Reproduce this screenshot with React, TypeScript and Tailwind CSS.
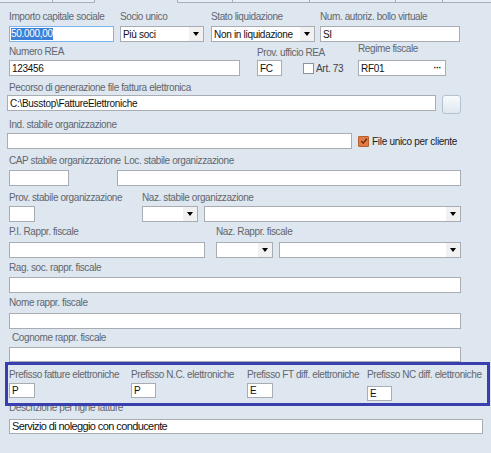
import React from "react"

type P = { children?: React.ReactNode; className?: string }

function Label({ children, className = "" }: P) {
  return (
    <div className={`h-[12px] whitespace-nowrap text-[10px] leading-[12px] tracking-[-0.4px] text-[#62676e] ${className}`}>
      {children}
    </div>
  )
}

function TextBox({ children, className = "" }: P) {
  return (
    <div className={`flex items-center overflow-hidden whitespace-nowrap border border-[#a9adb3] bg-white pl-[2px] text-[10px] tracking-[-0.3px] text-[#111] ${className}`}>
      {children}
    </div>
  )
}

function Select({ children, className = "" }: P) {
  return (
    <div className={`flex border border-[#a9adb3] bg-white ${className}`}>
      <div className="flex flex-1 items-center overflow-hidden whitespace-nowrap pl-[2px] text-[10px] tracking-[-0.3px] text-[#111]">
        {children}
      </div>
      <div className="flex w-[14px] items-center justify-center bg-[#f1f1f1]">
        <div className="h-0 w-0 border-x-[3.5px] border-t-[4px] border-x-transparent border-t-black" />
      </div>
    </div>
  )
}

export default function App() {
  return (
    <div className="h-[453px] w-[491px] overflow-hidden bg-[#dee6ef] font-['Liberation_Sans',Arial,sans-serif]">
      {/* tab strip */}
      <div className="flex h-[3px]">
        <div className="w-[53px] border-b border-r border-[#a4b0bd] bg-[#e9eef4]" />
        <div className="w-[42px] border-b border-r border-[#a4b0bd] bg-[#e9eef4]" />
        <div className="w-[82px]" />
        <div className="w-[56px] border-b border-x border-[#a4b0bd] bg-[#e9eef4]" />
        <div className="w-[77px] border-b border-r border-[#a4b0bd] bg-[#e9eef4]" />
        <div className="w-[86px] border-b border-r border-[#a4b0bd] bg-[#e9eef4]" />
        <div className="w-[47px] border-b border-r border-[#a4b0bd] bg-[#e9eef4]" />
        <div className="flex-1 border-b border-[#a4b0bd] bg-[#e9eef4]" />
      </div>

      {/* row 1 */}
      <div className="mt-[8px] flex">
        <div className="ml-[9px] flex w-[105px] flex-col">
          <Label>Importo capitale sociale</Label>
          <div className="mt-[3px] flex h-[16px] items-center border border-[#7eb4ea] bg-white pl-[1px] text-[10px] tracking-[-0.3px]">
            <span className="bg-[#3b80d6] leading-[12px] text-white">50.000,00</span>
          </div>
        </div>
        <div className="ml-[6px] flex w-[84px] flex-col">
          <Label>Socio unico</Label>
          <Select className="mt-[3px] h-[16px]">Più soci</Select>
        </div>
        <div className="ml-[7px] flex w-[104px] flex-col">
          <Label>Stato liquidazione</Label>
          <Select className="mt-[3px] h-[16px]">Non in liquidazione</Select>
        </div>
        <div className="ml-[5px] flex w-[140px] flex-col">
          <Label>Num. autoriz. bollo virtuale</Label>
          <TextBox className="mt-[3px] h-[16px]">SI</TextBox>
        </div>
      </div>

      {/* row 2 */}
      <div className="mt-[1px] flex">
        <div className="ml-[9px] flex w-[231px] flex-col">
          <div className="h-[17px] pt-[3px]">
            <Label>Numero REA</Label>
          </div>
          <TextBox className="h-[16px]">123456</TextBox>
        </div>
        <div className="ml-[17px] flex w-[25px] flex-col">
          <div className="h-[17px] pt-[4px]">
            <Label>Prov. ufficio REA</Label>
          </div>
          <TextBox className="h-[16px]">FC</TextBox>
        </div>
        <div className="ml-[21px] flex w-[55px] flex-col">
          <div className="h-[17px]" />
          <div className="flex h-[16px] items-center">
            <div className="h-[11px] w-[11px] border border-[#8e9298] bg-white" />
            <span className="ml-[2px] text-[10px] tracking-[-0.3px] text-[#3d4247]">Art. 73</span>
          </div>
        </div>
        <div className="flex w-[88px] flex-col">
          <div className="h-[17px]">
            <Label>Regime fiscale</Label>
          </div>
          <div className="flex h-[16px] items-center border border-[#a9adb3] bg-white pl-[2px] text-[10px] tracking-[-0.3px] text-[#111]">
            <span className="flex-1">RF01</span>
            <span className="mr-[4px] text-[9px] font-bold leading-none tracking-[-0.5px]">···</span>
          </div>
        </div>
      </div>

      {/* row 3 */}
      <div className="ml-[9px] mt-[6px]">
        <Label>Pecorso di generazione file fattura elettronica</Label>
      </div>
      <div className="mt-[1px] flex items-start">
        <TextBox className="ml-[7px] h-[16px] w-[429px]">C:\Busstop\FattureElettroniche</TextBox>
        <div className="ml-[6px] h-[19px] w-[19px] rounded-[3px] border border-[#b4c1d0] bg-gradient-to-b from-[#f8fafc] to-[#dfe7f0]" />
      </div>

      {/* row 4 */}
      <div className="ml-[9px] mt-[5px]">
        <Label>Ind. stabile organizzazione</Label>
      </div>
      <div className="mt-[2px] flex items-center">
        <TextBox className="ml-[7px] h-[16px] w-[345px]" />
        <div className="ml-[6px] flex h-[11px] w-[11px] items-center justify-center rounded-[1px] border border-[#b8602e] bg-[#e27a43]">
          <svg viewBox="0 0 10 10" className="h-[8px] w-[8px]">
            <path d="M1.5 5.2 L4 7.6 L8.6 2.2" fill="none" stroke="#5a2a10" strokeWidth="1.6" />
          </svg>
        </div>
        <span className="ml-[3px] text-[10px] tracking-[-0.3px] text-[#222]">File unico per cliente</span>
      </div>

      {/* row 5 */}
      <div className="mt-[6px] flex">
        <div className="ml-[9px] flex w-[60px] flex-col">
          <Label>CAP stabile organizzazione</Label>
          <TextBox className="mt-[3px] h-[16px]" />
        </div>
        <div className="ml-[48px] flex w-[344px] flex-col">
          <Label className="ml-[7px]">Loc. stabile organizzazione</Label>
          <TextBox className="mt-[3px] h-[16px]" />
        </div>
      </div>

      {/* row 6 */}
      <div className="mt-[6px] flex">
        <div className="ml-[9px] flex w-[26px] flex-col">
          <Label>Prov. stabile organizzazione</Label>
          <TextBox className="mt-[2px] h-[16px]" />
        </div>
        <div className="ml-[107px] flex w-[56px] flex-col">
          <Label>Naz. stabile organizzazione</Label>
          <Select className="mt-[2px] h-[16px]" />
        </div>
        <div className="ml-[6px] flex w-[257px] flex-col">
          <Label />
          <Select className="mt-[2px] h-[16px]" />
        </div>
      </div>

      {/* row 7 */}
      <div className="mt-[4px] flex">
        <div className="ml-[9px] flex w-[196px] flex-col">
          <Label>P.I. Rappr. fiscale</Label>
          <TextBox className="mt-[4px] h-[16px]" />
        </div>
        <div className="ml-[11px] flex w-[57px] flex-col">
          <Label>Naz. Rappr. fiscale</Label>
          <Select className="mt-[4px] h-[16px]" />
        </div>
        <div className="ml-[6px] flex w-[182px] flex-col">
          <Label />
          <Select className="mt-[4px] h-[16px]" />
        </div>
      </div>

      {/* rows 8-10 */}
      <div className="ml-[9px] mt-[4px] w-[452px]">
        <Label>Rag. soc. rappr. fiscale</Label>
        <TextBox className="mt-[3px] h-[16px]" />
      </div>
      <div className="ml-[9px] mt-[4px] w-[452px]">
        <Label>Nome rappr. fiscale</Label>
        <TextBox className="mt-[4px] h-[16px]" />
      </div>
      <div className="ml-[9px] mt-[3px] w-[452px]">
        <Label className="ml-[3px]">Cognome rappr. fiscale</Label>
        <TextBox className="mt-[3px] h-[15px]" />
      </div>

      {/* highlighted prefix group */}
      <div className="relative z-10 ml-[5px] flex h-[44px] w-[485px] border-[3px] border-[#393fae] bg-[#dee6ef] pt-[4px]">
        <div className="ml-[1px] flex w-[26px] flex-col">
          <Label>Prefisso fatture elettroniche</Label>
          <TextBox className="mt-[2px] h-[15px]">P</TextBox>
        </div>
        <div className="ml-[96px] flex w-[25px] flex-col">
          <Label>Prefisso N.C. elettroniche</Label>
          <TextBox className="mt-[2px] h-[15px]">P</TextBox>
        </div>
        <div className="ml-[91px] flex w-[26px] flex-col">
          <Label>Prefisso FT diff. elettroniche</Label>
          <TextBox className="mt-[2px] h-[15px]">E</TextBox>
        </div>
        <div className="ml-[94px] flex w-[25px] flex-col">
          <Label>Prefisso NC diff. elettroniche</Label>
          <TextBox className="mt-[5px] h-[15px]">E</TextBox>
        </div>
      </div>

      {/* description */}
      <div className="ml-[9px] mt-[-4px] w-[474px]">
        <Label>Descrizione per righe fatture</Label>
        <div className="mt-[5px] flex h-[15px] items-center border border-[#a9adb3] bg-white pl-[2px] text-[11px] tracking-[-0.6px] text-[#111]">
          Servizio di noleggio con conducente
        </div>
      </div>
    </div>
  )
}
